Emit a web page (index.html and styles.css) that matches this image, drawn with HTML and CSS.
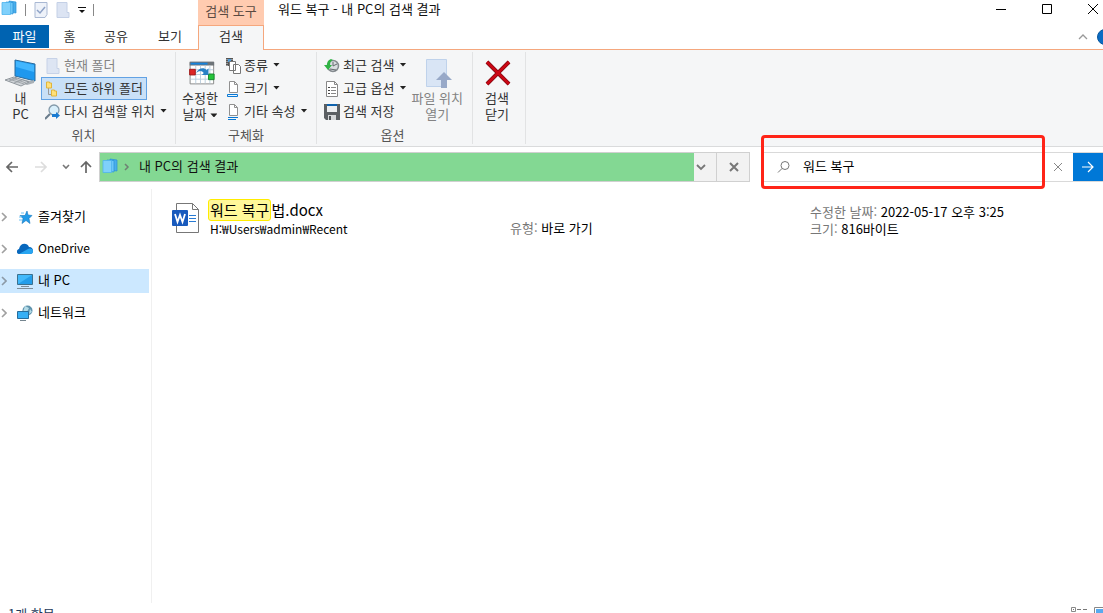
FILE: index.html
```html
<!DOCTYPE html>
<html lang="ko">
<head>
    <title>워드 복구 - 내 PC의 검색 결과</title>
    <meta charset="utf-8">
    <meta name="viewport" content="width=device-width, initial-scale=1.0">
    <link rel="stylesheet" href="styles.css">
</head>
<body>
    <div class="window">
        <header class="titlebar">
            <div class="quick-access">
                <svg class="app-icon" width="16" height="16" viewBox="0 0 16 16"><path d="M8 1l7 1v11l-7-1z" fill="#4aaeea" stroke="#2590d8" stroke-width=".7"/><path d="M5 2l7 .5V14l-7-1z" fill="#6cc6f8" stroke="#2590d8" stroke-width=".7"/><path d="M1 2.500h8.500v12H1z" fill="#7fd0fb" stroke="#4fb4ee" stroke-width=".8"/></svg>
                <span class="divider"></span>
                <button aria-label="속성"><svg width="14" height="18" viewBox="0 0 14 18"><path d="M1 1.500h12v12l-2 3H1z" fill="#eef2f9" stroke="#a9b8d3"/><path d="M3 9l3 3 5-6" fill="none" stroke="#8da2c7" stroke-width="1.500"/></svg></button>
                <button aria-label="새 폴더"><svg width="14" height="18" viewBox="0 0 14 18"><path d="M1 1.500h10v10h2v5H1z" fill="#dce4f3" stroke="#c4d0e6"/></svg></button>
                <button class="customize" aria-label="빠른 실행 도구 모음 사용자 지정"><svg width="8" height="8" viewBox="0 0 8 8"><path d="M0 1.500h8" stroke="#111"/><path d="M1 4h6L4 7z" fill="#111"/></svg></button>
                <span class="divider"></span>
            </div>
            <div class="context-title">검색 도구</div>
            <h1>워드 복구 - 내 PC의 검색 결과</h1>
            <div class="window-controls">
                <button aria-label="최소화"><svg width="12" height="12" viewBox="0 0 12 12"><path d="M1 6.500h10" stroke="#000"/></svg></button>
                <button aria-label="최대화"><svg width="12" height="12" viewBox="0 0 12 12"><path d="M1.500 1.500h9v9h-9z" fill="none" stroke="#000"/></svg></button>
                <button aria-label="닫기"><svg width="12" height="12" viewBox="0 0 12 12"><path d="M1 1l10 10M11 1L1 11" stroke="#000"/></svg></button>
            </div>
        </header>

        <nav class="tabs">
            <button class="tab tab-file">파일</button>
            <button class="tab tab-home">홈</button>
            <button class="tab tab-share">공유</button>
            <button class="tab tab-view">보기</button>
            <button class="tab tab-search">검색</button>
            <div class="tab-tools">
                <button aria-label="리본 최소화"><svg width="10" height="6" viewBox="0 0 10 6"><path d="M1 5l4-4 4 4" fill="none" stroke="#999" stroke-width="1.300"/></svg></button>
                <button class="help" aria-label="도움말"><svg width="16" height="16" viewBox="0 0 16 16"><circle cx="8" cy="8" r="7.500" fill="#0a6cc4" stroke="#08569c"/></svg></button>
            </div>
        </nav>

        <div class="ribbon">
            <section class="group group-location">
                <div class="group-body">
                    <button class="large">
                        <svg width="32" height="32" viewBox="0 0 32 32"><path d="M10 2l20 4v17l-20-5z" fill="#1e98ee" stroke="#2b6c9e"/><path d="M11 3l18 4v7L11 9z" fill="#41b6ff"/><path d="M17 21l8 2 4-1v3l-7 2-8-3z" fill="#a9b0b6"/><path d="M0 22l9-3 15 5-8 4z" fill="#d0d4d8" stroke="#90979d"/><path d="M4 21l15 5M7 20l14 5M4 23l8-3M9 25l8-3" stroke="#8b9298" stroke-width=".7"/></svg>
                        <span>내<br>PC</span>
                    </button>
                    <div class="commands">
                        <button class="command" disabled><svg width="18" height="18" viewBox="0 0 18 18"><path d="M2 1.500h10v10h2v5H2z" fill="#dde5f3" stroke="#c7d2e7"/></svg>현재 폴더</button>
                        <button class="command active"><svg width="18" height="18" viewBox="0 0 18 18"><path d="M3.500 7v7.500H7" fill="none" stroke="#999"/><path d="M1.500 2h3v1h2v5h-5zM6.500 10h3v1h2v5h-5z" fill="#ffe07a" stroke="#e0b53c"/></svg>모든 하위 폴더</button>
                        <button class="command"><svg width="18" height="18" viewBox="0 0 18 18"><path d="M0 16l5-5" stroke="#6a7c8c" stroke-width="2"/><circle cx="9" cy="7" r="5" fill="#d8effb" stroke="#8399a9" stroke-width="1.300"/><path d="M7 11h4V9l4 3.500-4 3.500v-2H7z" fill="#197bd2"/></svg>다시 검색할 위치<i class="caret"></i></button>
                    </div>
                </div>
                <h2>위치</h2>
            </section>

            <section class="group group-refine">
                <div class="group-body">
                    <button class="large">
                        <svg width="32" height="32" viewBox="-3 -1 34 34"><path d="M3.500 3.500h25v23h-25z" fill="#fff" stroke="#858585"/><path d="M3 3h26v4H3z" fill="#6e7479"/><path d="M4 5h18" stroke="#1683dc" stroke-width="2"/><path d="M9.500 7v19M14.500 7v19M19.500 7v19M24.500 7v19M4 11.500h24M4 16.500h24M4 21.500h24" stroke="#b9cddd"/><path d="M3 11h6v6H3z" fill="#dc2626" stroke="#9f1717"/><path d="M23 16h6v6h-6z" fill="#25c43a" stroke="#13852b"/><path d="M10 15c2-5 8-7 11-3l2-2v7h-7l2-2c-2-3-5-3-8 0z" fill="#2881c5"/></svg>
                        <span>수정한<br>날짜<i class="caret"></i></span>
                    </button>
                    <div class="commands">
                        <button class="command"><svg width="18" height="18" viewBox="0 0 18 18"><path d="M1 1h7v8H1z" fill="#555"/><path d="M2 2v7M7 2v7" stroke="#ddd" stroke-dasharray="1 1"/><path d="M3 2h3v3H3z" fill="#4c9cda"/><path d="M4.500 4.500h6v9h-6zM8.500 7.500h5l2 2v7h-7z" fill="#fff" stroke="#777"/></svg>종류<i class="caret"></i></button>
                        <button class="command"><svg width="18" height="18" viewBox="0 0 18 18"><path d="M4.500 1.500h5l3 3v8h-8z" fill="#fff" stroke="#909090"/><path d="M9.500 1.500v3h3" fill="none" stroke="#909090"/><path d="M2.500 14.500h10v2h-10z" fill="#eaf5ff" stroke="#0878d4"/></svg>크기<i class="caret"></i></button>
                        <button class="command"><svg width="18" height="18" viewBox="0 0 18 18"><path d="M4.500 1.500h5l3 3v8h-8z" fill="#fff" stroke="#909090"/><path d="M9.500 1.500v3h3" fill="none" stroke="#909090"/><path d="M3 14.500h10M3 16.500h8" stroke="#0878d4"/></svg>기타 속성<i class="caret"></i></button>
                    </div>
                </div>
                <h2>구체화</h2>
            </section>

            <section class="group group-options">
                <div class="group-body">
                    <div class="commands">
                        <button class="command"><svg width="18" height="18" viewBox="0 0 18 18"><circle cx="9" cy="9" r="5.500" fill="#d9dde0" stroke="#858b90" stroke-width="1.500"/><path d="M9 5v4l4-2M6 12l6 1" fill="none" stroke="#63696e"/><path d="M7 2C4 3 3 5 3 8H0l4 5 4-5H6c0-3 1-4 3-5z" fill="#2fb344"/></svg>최근 검색<i class="caret"></i></button>
                        <button class="command"><svg width="18" height="18" viewBox="0 0 18 18"><path d="M2.500 1.500h8l3 3v12h-11z" fill="#fff" stroke="#888"/><path d="M10.500 1.500v3h3M7 7.500h5M7 10.500h5M7 13.500h5" fill="none" stroke="#888"/><path d="M4 7.500h2M4 10.500h2M4 13.500h2" stroke="#444"/></svg>고급 옵션<i class="caret"></i></button>
                        <button class="command"><svg width="18" height="18" viewBox="0 0 18 18"><path d="M0 1h16v16H2l-2-2z" fill="#5b5f63"/><path d="M3 1h10v8H3z" fill="#eceef0"/><path d="M3 1h10v2H3z" fill="#0e62ad"/><path d="M4 12h8v5H4z" fill="#d5d7d9"/><path d="M5 13h2v4H5z" fill="#505458"/></svg>검색 저장</button>
                    </div>
                    <button class="large" disabled>
                        <svg width="32" height="32" viewBox="0 0 32 32"><path d="M5.500 1.500h20v27h-20z" fill="#d9e5f5" stroke="#bfd2eb"/><path d="M15 22l8-8 8 8h-5v8h-6v-8z" fill="#98a9c8"/></svg>
                        <span>파일 위치<br>열기</span>
                    </button>
                </div>
                <h2>옵션</h2>
            </section>

            <section class="group group-close">
                <div class="group-body">
                    <button class="large">
                        <svg width="32" height="32" viewBox="0 0 32 32"><path d="M6 4l22 22M28 4L6 26" stroke="#7d0710" stroke-width="4"/><path d="M6 4l22 22M28 4L6 26" stroke="#cb0714" stroke-width="2.500"/></svg>
                        <span>검색<br>닫기</span>
                    </button>
                </div>
            </section>
        </div>

        <div class="navbar">
            <div class="history">
                <button aria-label="뒤로"><svg width="14" height="12" viewBox="0 0 14 12"><path d="M13 6H2M7 1L2 6l5 5" fill="none" stroke="#666" stroke-width="1.700"/></svg></button>
                <button aria-label="앞으로"><svg width="14" height="12" viewBox="0 0 14 12"><path d="M1 6h11M7 1l5 5-5 5" fill="none" stroke="#ddd" stroke-width="1.700"/></svg></button>
                <button class="recent" aria-label="최근 위치"><svg width="8" height="6" viewBox="0 0 8 6"><path d="M1 1l3 3 3-3" fill="none" stroke="#777" stroke-width="1.600"/></svg></button>
                <button class="up" aria-label="위로"><svg width="12" height="14" viewBox="0 0 12 14"><path d="M6 13V2M1 7l5-5 5 5" fill="none" stroke="#666" stroke-width="1.700"/></svg></button>
            </div>
            <div class="address">
                <div class="path">
                    <svg width="16" height="16" viewBox="0 0 16 16"><path d="M8 1l7 1v11l-7-1z" fill="#4aaeea" stroke="#2590d8" stroke-width=".7"/><path d="M5 2l7 .5V14l-7-1z" fill="#6cc6f8" stroke="#2590d8" stroke-width=".7"/><path d="M1 2.500h8.500v12H1z" fill="#7fd0fb" stroke="#4fb4ee" stroke-width=".8"/></svg>
                    <svg class="crumb" width="6" height="8" viewBox="0 0 6 8"><path d="M1 1l3 3-3 3" fill="none" stroke="#6f8173" stroke-width="1.500"/></svg>
                    <a href="#">내 PC의 검색 결과</a>
                </div>
                <button class="previous" aria-label="이전 위치"><svg width="10" height="8" viewBox="0 0 10 8"><path d="M1 2l4 4 4-4" fill="none" stroke="#777" stroke-width="1.800"/></svg></button>
                <button class="stop" aria-label="중지"><svg width="10" height="10" viewBox="0 0 10 10"><path d="M1 1l8 8M9 1L1 9" stroke="#777" stroke-width="2"/></svg></button>
            </div>
            <form class="search">
                <svg width="14" height="14" viewBox="0 0 14 14"><circle cx="8" cy="5.500" r="4" fill="none" stroke="#777"/><path d="M5 8.500l-4 4" stroke="#777"/></svg>
                <input type="text" aria-label="검색" value="워드 복구">
                <button type="button" class="clear" aria-label="지우기"><svg width="10" height="10" viewBox="0 0 10 10"><path d="M1 1l8 8M9 1L1 9" stroke="#888"/></svg></button>
                <button type="button" class="go" aria-label="검색 실행"><svg width="14" height="12" viewBox="0 0 14 12"><path d="M1 6h11M7 1l5 5-5 5" fill="none" stroke="#fff" stroke-width="1.200"/></svg></button>
                <span class="marker"></span>
            </form>
        </div>

        <div class="content">
            <nav class="sidebar">
                <a href="#"><svg class="expand" width="6" height="10" viewBox="0 0 6 10"><path d="M1 1l4 4-4 4" fill="none" stroke="#a0a0a0" stroke-width="1.600"/></svg><svg width="16" height="16" viewBox="0 0 16 16"><path d="M10 2l1 4 4 .5-3 3 1 5-4-3-4 3 1-5-3-3h5z" fill="#229be8" stroke="#1476bd" stroke-width=".6"/><path d="M4 4h3M2 8h3M2 11h3" stroke="#72c3f3"/></svg>즐겨찾기</a>
                <a href="#"><svg class="expand" width="6" height="10" viewBox="0 0 6 10"><path d="M1 1l4 4-4 4" fill="none" stroke="#a0a0a0" stroke-width="1.600"/></svg><svg width="16" height="16" viewBox="0 0 16 16"><path d="M2 8c1-6 8-7 10-2 3 0 4 2 4 4 0 2-1 3-3 3H3c-4 0-4-4-1-5z" fill="#0868bd"/><path d="M2 13l9-5c3-1 5 0 5 2s-1 3-3 3z" fill="#28a5f1"/></svg><span class="latin">OneDrive</span></a>
                <a href="#" class="selected"><svg class="expand" width="6" height="10" viewBox="0 0 6 10"><path d="M1 1l4 4-4 4" fill="none" stroke="#8c9aa7" stroke-width="1.600"/></svg><svg width="16" height="16" viewBox="0 0 16 16"><path d="M.5 1.500h15v10H.5z" fill="#42b9fa" stroke="#3c718e"/><path d="M1 11l14-9v9z" fill="#249de9"/><path d="M4 13.500h8M0 15.500h16" stroke="#7e8d97"/></svg>내 PC</a>
                <a href="#"><svg class="expand" width="6" height="10" viewBox="0 0 6 10"><path d="M1 1l4 4-4 4" fill="none" stroke="#a0a0a0" stroke-width="1.600"/></svg><svg width="16" height="16" viewBox="0 0 16 16"><circle cx="10.500" cy="5.500" r="5" fill="#5f93ad"/><path d="M8 1l4 2-2 4H6zM13 4l2 3-3 2z" fill="#b4dce8"/><path d="M.5 6.500h11v7H.5z" fill="#36aff5" stroke="#266d9c"/><path d="M3 15.500h6" stroke="#75858f"/></svg>네트워크</a>
            </nav>

            <main class="results">
                <article class="result">
                    <svg class="word-icon" width="28" height="32" viewBox="0 0 28 32"><path d="M4.500 1.500h16l6 6v23h-22z" fill="#fff" stroke="#777"/><path d="M20.500 1.500v6h6" fill="none" stroke="#777"/><path d="M17 13.500h7M17 16.500h7M17 19.500h7" stroke="#287bd4"/><rect y="8" width="16" height="16" rx="1" fill="#185abd"/><path d="M3 12l2.500 8L8 13l2.500 7L13 12" fill="none" stroke="#fff" stroke-width="1.800"/></svg>
                    <div class="file">
                        <h3><mark>워드 복구</mark>법.docx</h3>
                        <p class="latin">H:₩Users₩admin₩Recent</p>
                    </div>
                    <p class="type"><span>유형:</span> 바로 가기</p>
                    <div class="details">
                        <p><span>수정한 날짜:</span> 2022-05-17 오후 3:25</p>
                        <p><span>크기:</span> 816바이트</p>
                    </div>
                </article>
            </main>
        </div>

        <footer class="statusbar">
            <span class="count">1개 항목</span>
            <div class="view-modes">
                <button aria-label="자세히"><svg width="16" height="14" viewBox="0 0 16 14"><path d="M.5.5h4v4h-4zM.5 7.500h4v4h-4z" fill="#fff" stroke="#888"/><path d="M2 2.500h1M6 2.500h4M12 2.500h4M6 9.500h4M12 9.500h4" stroke="#777"/></svg></button>
                <button aria-label="큰 아이콘"><svg width="16" height="14" viewBox="0 0 16 14"><path d="M.5.5h15v13H.5z" fill="#fff" stroke="#888"/><path d="M2 2h12v10H2z" fill="#58aaf0"/></svg></button>
            </div>
        </footer>
    </div>
</body>
</html>
```
FILE: styles.css
```css
* {
    box-sizing: border-box;
}
body {
    margin: 0;
    height: 100vh;
    overflow: hidden;
    background: #fff;
    color: #111;
    font: 13px/16px "Noto Sans CJK KR", sans-serif;
}
h1, h2, h3, p {
    margin: 0;
    font-size: inherit;
    font-weight: normal;
}
button {
    display: flex;
    align-items: center;
    justify-content: center;
    padding: 0;
    border: 0;
    background: none;
    color: inherit;
    font: inherit;
}
svg {
    flex: none;
}
a {
    color: inherit;
    text-decoration: none;
}
.latin {
    font-size: 12px;
}
.window {
    display: flex;
    flex-direction: column;
    height: calc(100vh + 12px);
}

/* title bar */
.titlebar {
    display: flex;
    height: 25px;
}
.titlebar h1 {
    padding-left: 14px;
    line-height: 17px;
}
.quick-access {
    display: flex;
    align-items: center;
    gap: 8px;
    width: 198px;
    height: 20px;
    padding-left: 1px;
}
.quick-access .app-icon {
    margin-bottom: 4px;
}
.quick-access .divider {
    width: 1px;
    height: 12px;
    background: #888;
}
.quick-access .divider:last-child {
    margin-left: -1px;
}
.context-title {
    width: 66px;
    background: #ffcbb0;
    color: #5a4a42;
    line-height: 21px;
    text-align: center;
}
.window-controls {
    display: flex;
    height: 18px;
    margin-left: auto;
    margin-right: -13px;
}
.window-controls button {
    width: 46px;
}

/* tabs */
.tabs {
    display: flex;
    height: 25px;
    border-bottom: 1px solid #f5a77d;
}
.tab {
    padding-bottom: 2px;
    color: #333;
}
.tab-file {
    width: 49px;
    height: 23px;
    background: #0063b1;
    color: #fff;
}
.tab-home {
    width: 41px;
}
.tab-share {
    width: 52px;
}
.tab-view {
    width: 56px;
}
.tab-search {
    width: 66px;
    height: 25px;
    padding-bottom: 4px;
    border: 1px solid #f5a77d;
    border-bottom: 0;
    background: #f5f6f7;
}
.tab-tools {
    display: flex;
    align-items: center;
    gap: 9px;
    margin-left: auto;
    margin-right: -10px;
}

/* ribbon */
.ribbon {
    display: flex;
    height: 97px;
    border-bottom: 1px solid #dadbdc;
    background: #f5f6f7;
}
.group {
    height: 92px;
    margin-top: 2px;
    padding-top: 2px;
    border-right: 1px solid #e2e3e4;
    color: #333;
}
.group h2 {
    color: #555;
    line-height: 24px;
    text-align: center;
}
.group-body {
    display: flex;
    height: 69px;
}
.group-location {
    width: 176px;
}
.group-location h2 {
    padding-right: 8px;
}
.group-refine {
    width: 141px;
}
.group-options {
    width: 156px;
}
.group-options .group-body {
    padding: 0 5px 0 6px;
}
.group-options h2 {
    padding-right: 4px;
}
.group-close {
    width: 53px;
}
.large {
    flex-direction: column;
    justify-content: flex-start;
    width: 48px;
    padding-top: 4px;
    white-space: nowrap;
}
.group-location .large {
    width: 41px;
}
.group-options .large {
    width: 60px;
    margin-left: auto;
}
.commands {
    display: flex;
    flex-direction: column;
    align-items: flex-start;
}
.command {
    height: 23px;
    padding: 0 3px 2px;
    gap: 1px;
    border: 1px solid transparent;
    white-space: nowrap;
}
.command svg {
    margin-top: 2px;
}
.group-refine .command,
.group-options .command {
    padding: 0 0 2px;
}
.command.active {
    border-color: #62a2e4;
    background: #c9e0f7;
}
button:disabled {
    color: #838383;
}
.caret {
    display: inline-block;
    width: 7px;
    height: 4px;
    margin-left: 4px;
    background: #222;
    clip-path: polygon(0 0, 100% 0, 50% 100%);
    vertical-align: middle;
}

/* navigation bar */
.navbar {
    display: flex;
    height: 42px;
    padding: 5px 0 7px;
}
.history {
    display: flex;
    align-items: center;
    gap: 15px;
    width: 99px;
    padding-left: 5px;
}
.history .recent {
    margin-left: -1px;
}
.history .up {
    margin-left: -5px;
}
.address {
    display: flex;
    flex: 1;
    border: 1px solid #d0d0d0;
}
.path {
    display: flex;
    flex: 1;
    align-items: center;
    padding: 0 0 2px 2px;
    background: #83d893;
}
.path .crumb {
    margin: 2px 9px 0 6px;
}
.previous {
    justify-content: flex-start;
    width: 22px;
    padding-left: 2px;
    background: #f2f2f2;
}
.stop {
    width: 33px;
    padding-left: 1px;
    border-left: 1px solid #d0d0d0;
    background: #f2f2f2;
}
.search {
    position: relative;
    display: flex;
    align-items: center;
    width: 340px;
    margin-left: 13px;
    padding-left: 13px;
    border: 1px solid #d9d9d9;
    border-right: 0;
}
.search input {
    flex: 1;
    min-width: 0;
    padding: 0 0 2px 12px;
    border: 0;
    outline: 0;
    background: none;
    color: #000;
    font: inherit;
}
.clear {
    width: 30px;
}
.go {
    align-self: stretch;
    width: 30px;
    background: #0078d7;
}
.marker {
    position: absolute;
    top: -18px;
    right: 58px;
    left: -3px;
    height: 54px;
    border: 3px solid #ff2417;
    border-radius: 4px;
    pointer-events: none;
}

/* content */
.content {
    display: flex;
    flex: 1;
    min-height: 0;
}
.sidebar {
    display: flex;
    flex-direction: column;
    gap: 8px;
    width: 152px;
    padding: 16px 2px 0 0;
    border-right: 1px solid #f0f0f0;
}
.sidebar a {
    display: flex;
    align-items: center;
    gap: 5px;
    height: 24px;
    padding-bottom: 2px;
    color: #000;
}
.sidebar svg {
    margin-top: 2px;
}
.sidebar .expand {
    margin: 2px 5px 0 1px;
}
.sidebar .selected {
    background: #cce8ff;
}
.results {
    flex: 1;
    padding: 10px 0 0 20px;
}
.result {
    display: grid;
    grid-template-columns: 38px 300px 300px 1fr;
    color: #000;
}
.word-icon {
    margin-top: 3px;
}
.file h3 {
    font-size: 15px;
    line-height: 22px;
}
.file mark {
    display: inline-block;
    height: 22px;
    margin-left: -2px;
    padding: 0 1px;
    border: 1px solid #ffec00;
    border-radius: 3px;
    background: #fff799;
    color: inherit;
    line-height: 20px;
}
.type {
    padding-top: 21px;
}
.details {
    padding-top: 4px;
    line-height: 17px;
}
.type span,
.details span {
    color: #777;
}

/* status bar */
.statusbar {
    display: flex;
    align-items: flex-start;
    height: 22px;
    padding: 3px 0 0 8px;
    color: #1e395b;
}
.view-modes {
    display: flex;
    gap: 7px;
    margin-left: auto;
    margin-right: -7px;
    padding-top: 1px;
}
```
